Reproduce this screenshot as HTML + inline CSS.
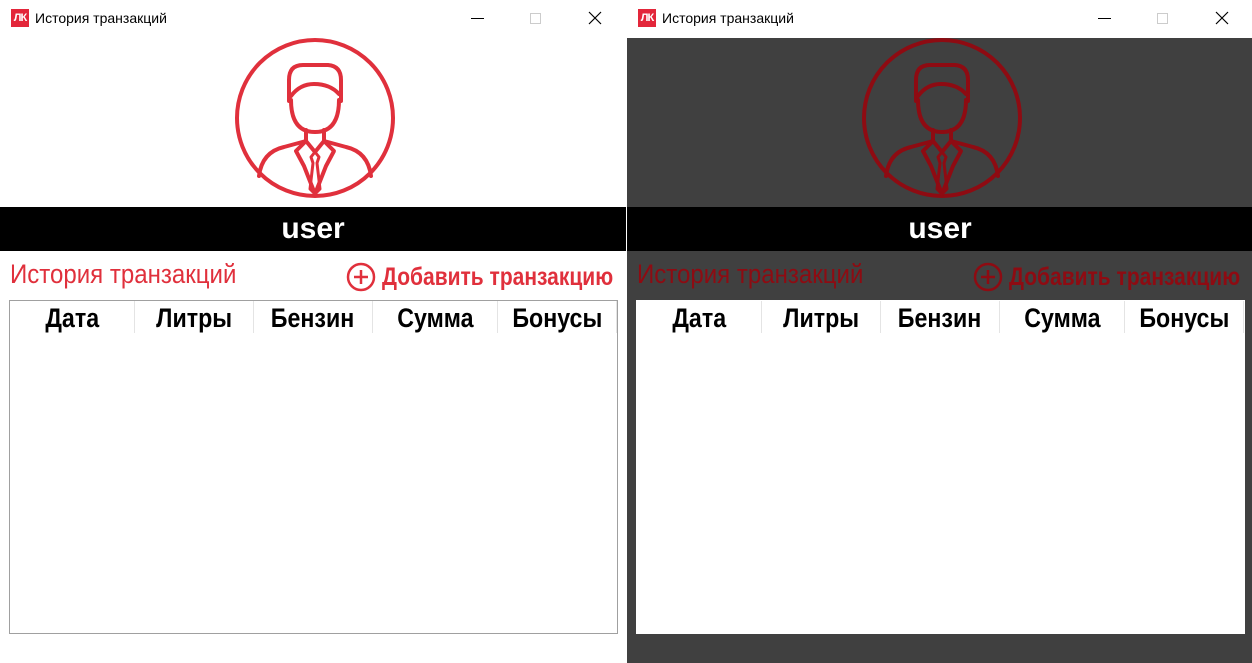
<!DOCTYPE html>
<html><head><meta charset="utf-8"><style>
*{margin:0;padding:0;box-sizing:border-box}
body{width:1252px;height:663px;overflow:hidden;background:#fff;position:relative;font-family:"Liberation Sans",sans-serif}
.win{position:absolute;top:0;width:626px;height:663px;background:#fff}
.tb{position:absolute;left:0;top:0;width:626px;height:38px;background:#fff}
.logo{position:absolute;left:11px;top:9px;width:18px;height:18px;background:#e3263a;color:#fff;font:bold 11px/18px "Liberation Sans",sans-serif;text-align:center;letter-spacing:-1px}
.tt{position:absolute;left:35px;top:10px;font:14px "Liberation Sans",sans-serif;color:#000}
.min{position:absolute;left:471px;top:18px;width:13px;height:1px;background:#000}
.max{position:absolute;left:530px;top:13px;width:11px;height:11px;border:1px solid #ccc}
.cl{position:absolute;left:588px;top:11px;width:14px;height:14px}
.body{position:absolute;left:0;top:38px;width:626px;height:625px}
.bar{position:absolute;left:0;top:207px;width:626px;height:44px;background:#000;color:#fff;font:bold 30px/44px "Liberation Sans",sans-serif;text-align:center}
.h1{position:absolute;left:10px;top:259px;font:27px "Liberation Sans",sans-serif;color:#e0303c;transform:scaleX(0.89);transform-origin:left;white-space:nowrap}
.addi{position:absolute;left:346px;top:262px}
.add{position:absolute;left:382px;top:262px;height:30px;font:bold 25px/30px "Liberation Sans",sans-serif;color:#e0303c;white-space:nowrap;transform:scaleX(0.84);transform-origin:left}
.tbl{position:absolute;left:9px;top:300px;width:609px;height:334px;background:#fff;border:1px solid #a0a0a0}
.hd{position:absolute;top:0;height:32px;text-align:center;border-right:1px solid #e4e4e4}
.hd span{display:inline-block;font:bold 27px/34px "Liberation Sans",sans-serif;color:#000;transform:scaleX(0.86)}
.dark .body{background:#404040}
.dark .h1,.dark .add{color:#8e0b12}
.dark .tbl{border-color:#fff}
</style></head><body>

<div class="win" style="left:0">
<div class="tb"><div class="logo">ЛК</div><div class="tt">История транзакций</div><div class="min"></div><div class="max"></div>
<svg class="cl" viewBox="0 0 14 14"><path d="M1 1L13 13M13 1L1 13" stroke="#000" stroke-width="1.2"/></svg></div>
<div class="body"></div>
<svg style="position:absolute;left:0;top:0" width="626" height="210" fill="none" stroke="#e0303c" stroke-width="4" stroke-linecap="round" stroke-linejoin="round">
<circle cx="315" cy="118" r="78"/>
<path d="M289 101V80Q289 65 303 65H328Q341 66 341 80V101"/>
<path d="M291 96Q300 84 314 84Q330 84 339 94"/>
<path d="M291 100Q291 132 315 132Q339 132 339 100"/>
<path d="M306 130V141M324 130V141"/>
<path d="M259 176Q262 152 284 147L306 141M371 176Q368 152 346 147L324 141"/>
<path d="M306 141L296 151L304 166L315 194M324 141L334 151L326 166L315 194"/>
<path d="M306 141L315 152L324 141"/>
<path d="M311 157L315 152L319 157L317 163L320 189L315 194L310 189L313 163Z" stroke-width="3"/>
</svg>
<div class="bar">user</div>
<div class="h1">История транзакций</div>
<svg class="addi" width="30" height="30" viewBox="0 0 30 30" fill="none" stroke="#e0303c" stroke-width="2.5"><circle cx="15" cy="15" r="13"/><path d="M15 8V22M8 15H22"/></svg>
<div class="add">Добавить транзакцию</div>
<div class="tbl">
<div class="hd" style="left:0;width:125px"><span>Дата</span></div>
<div class="hd" style="left:125px;width:119px"><span>Литры</span></div>
<div class="hd" style="left:244px;width:119px"><span>Бензин</span></div>
<div class="hd" style="left:363px;width:125px"><span>Сумма</span></div>
<div class="hd" style="left:488px;width:119px"><span>Бонусы</span></div>
</div>
</div>

<div class="win dark" style="left:627px">
<div class="tb"><div class="logo">ЛК</div><div class="tt">История транзакций</div><div class="min"></div><div class="max"></div>
<svg class="cl" viewBox="0 0 14 14"><path d="M1 1L13 13M13 1L1 13" stroke="#000" stroke-width="1.2"/></svg></div>
<div class="body"></div>
<svg style="position:absolute;left:0;top:0" width="626" height="210" fill="none" stroke="#8e0b12" stroke-width="4" stroke-linecap="round" stroke-linejoin="round">
<circle cx="315" cy="118" r="78"/>
<path d="M289 101V80Q289 65 303 65H328Q341 66 341 80V101"/>
<path d="M291 96Q300 84 314 84Q330 84 339 94"/>
<path d="M291 100Q291 132 315 132Q339 132 339 100"/>
<path d="M306 130V141M324 130V141"/>
<path d="M259 176Q262 152 284 147L306 141M371 176Q368 152 346 147L324 141"/>
<path d="M306 141L296 151L304 166L315 194M324 141L334 151L326 166L315 194"/>
<path d="M306 141L315 152L324 141"/>
<path d="M311 157L315 152L319 157L317 163L320 189L315 194L310 189L313 163Z" stroke-width="3"/>
</svg>
<div class="bar">user</div>
<div class="h1">История транзакций</div>
<svg class="addi" width="30" height="30" viewBox="0 0 30 30" fill="none" stroke="#8e0b12" stroke-width="2.5"><circle cx="15" cy="15" r="13"/><path d="M15 8V22M8 15H22"/></svg>
<div class="add">Добавить транзакцию</div>
<div class="tbl">
<div class="hd" style="left:0;width:125px"><span>Дата</span></div>
<div class="hd" style="left:125px;width:119px"><span>Литры</span></div>
<div class="hd" style="left:244px;width:119px"><span>Бензин</span></div>
<div class="hd" style="left:363px;width:125px"><span>Сумма</span></div>
<div class="hd" style="left:488px;width:119px"><span>Бонусы</span></div>
</div>
</div>
</body></html>
